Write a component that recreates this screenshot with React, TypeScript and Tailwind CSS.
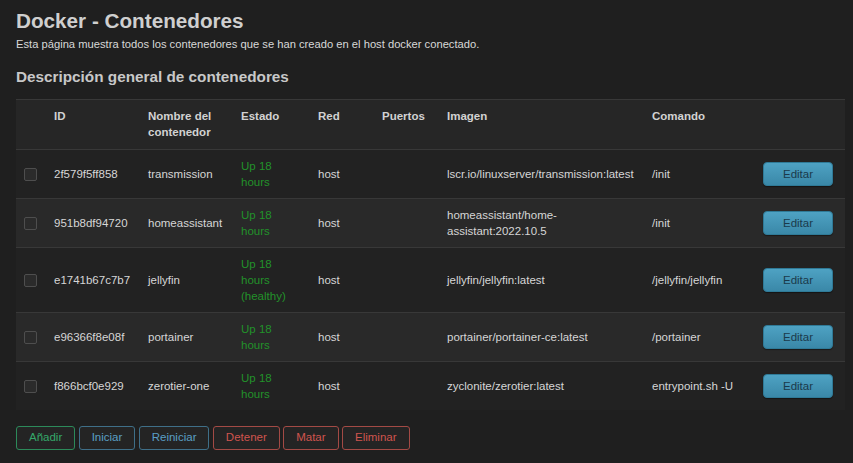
import { useState } from 'react'

type Container = {
  id: string
  name: string
  status: string[]
  network: string
  ports: string
  image: string[]
  command: string
}

const containers: Container[] = [
  { id: '2f579f5ff858', name: 'transmission', status: ['Up 18', 'hours'], network: 'host', ports: '', image: ['lscr.io/linuxserver/transmission:latest'], command: '/init' },
  { id: '951b8df94720', name: 'homeassistant', status: ['Up 18', 'hours'], network: 'host', ports: '', image: ['homeassistant/home-', 'assistant:2022.10.5'], command: '/init' },
  { id: 'e1741b67c7b7', name: 'jellyfin', status: ['Up 18', 'hours', '(healthy)'], network: 'host', ports: '', image: ['jellyfin/jellyfin:latest'], command: '/jellyfin/jellyfin' },
  { id: 'e96366f8e08f', name: 'portainer', status: ['Up 18', 'hours'], network: 'host', ports: '', image: ['portainer/portainer-ce:latest'], command: '/portainer' },
  { id: 'f866bcf0e929', name: 'zerotier-one', status: ['Up 18', 'hours'], network: 'host', ports: '', image: ['zyclonite/zerotier:latest'], command: 'entrypoint.sh -U' },
]

const actions = [
  { label: 'Añadir', cls: 'border-[#2c8a5a] text-[#35a86a]' },
  { label: 'Iniciar', cls: 'border-[#3f6f88] text-[#5a9fc4]' },
  { label: 'Reiniciar', cls: 'border-[#3f6f88] text-[#5a9fc4]' },
  { label: 'Detener', cls: 'border-[#a34a45] text-[#d0544e]' },
  { label: 'Matar', cls: 'border-[#a34a45] text-[#d0544e]' },
  { label: 'Eliminar', cls: 'border-[#a34a45] text-[#d0544e]' },
]

function Checkbox({ checked, onChange }: { checked: boolean; onChange: () => void }) {
  return (
    <button
      onClick={onChange}
      className="block h-[13px] w-[13px] rounded-[2px] border border-[#4e4e4e] bg-[#2b2b2b]"
    >
      {checked && <span className="block h-full w-full bg-[#3a86a6]" />}
    </button>
  )
}

export default function App() {
  const [selected, setSelected] = useState<string[]>([])

  const toggle = (id: string) =>
    setSelected((s) => (s.includes(id) ? s.filter((x) => x !== id) : [...s, id]))

  return (
    <div className="min-h-[463px] bg-[#1f1f1f] px-4 pt-[7px] font-['Liberation_Sans',Arial,sans-serif] text-[#d6d6d6]">
      <h1 className="text-[20.7px] font-bold leading-[28px] text-[#cfcfcf]">Docker - Contenedores</h1>
      <p className="mt-[2px] text-[11.2px] leading-[14px] text-[#d8d8d8]">
        Esta página muestra todos los contenedores que se han creado en el host docker conectado.
      </p>
      <h2 className="mt-[16px] text-[15.3px] font-bold leading-[20px] text-[#c8c8c8]">
        Descripción general de contenedores
      </h2>

      <table className="mt-[12px] w-[829px] table-fixed border-collapse text-[11.5px] leading-[16px]">
        <colgroup>
          <col className="w-[30px]" />
          <col className="w-[94px]" />
          <col className="w-[93px]" />
          <col className="w-[77px]" />
          <col className="w-[64px]" />
          <col className="w-[65px]" />
          <col className="w-[205px]" />
          <col className="w-[111px]" />
          <col className="w-[90px]" />
        </colgroup>
        <thead>
          <tr className="border-y border-[#383838] bg-[#262626] text-left align-top font-bold text-[#d2d2d2]">
            <th className="px-2 pb-[9px] pt-[8px]" />
            <th className="px-2 pb-[9px] pt-[8px]">ID</th>
            <th className="px-2 pb-[9px] pt-[8px]">Nombre del contenedor</th>
            <th className="px-2 pb-[9px] pt-[8px]">Estado</th>
            <th className="px-2 pb-[9px] pt-[8px]">Red</th>
            <th className="px-2 pb-[9px] pt-[8px]">Puertos</th>
            <th className="px-2 pb-[9px] pt-[8px]">Imagen</th>
            <th className="px-2 pb-[9px] pt-[8px]">Comando</th>
            <th className="px-2 pb-[9px] pt-[8px]" />
          </tr>
        </thead>
        <tbody>
          {containers.map((c, i) => (
            <tr
              key={c.id}
              className={
                'align-middle ' +
                (i % 2 === 1 ? 'bg-[#292929] ' : 'bg-[#222222] ') +
                (i < containers.length - 1 ? 'border-b border-[#383838]' : '')
              }
            >
              <td className="px-2 py-2">
                <Checkbox checked={selected.includes(c.id)} onChange={() => toggle(c.id)} />
              </td>
              <td className="px-2 py-2">{c.id}</td>
              <td className="px-2 py-2">{c.name}</td>
              <td className="px-2 py-2 text-[#22922a]">
                {c.status.map((s) => (
                  <div key={s}>{s}</div>
                ))}
              </td>
              <td className="px-2 py-2">{c.network}</td>
              <td className="px-2 py-2">{c.ports}</td>
              <td className="px-2 py-2">
                {c.image.map((s) => (
                  <div key={s}>{s}</div>
                ))}
              </td>
              <td className="px-2 py-2">{c.command}</td>
              <td className="px-2 py-2">
                <button className="h-[24px] w-[70px] rounded-[4px] border border-[#2f7a97] bg-gradient-to-b from-[#4ea2c3] to-[#3a88a8] text-[11.5px] text-[#1b3a4b] shadow-[0_1px_1px_rgba(0,0,0,0.4)]">
                  Editar
                </button>
              </td>
            </tr>
          ))}
        </tbody>
      </table>

      <div className="mt-[16px] flex gap-[3.4px]">
        {actions.map((a) => (
          <button
            key={a.label}
            className={'h-[24px] rounded-[3px] border bg-[#242424] px-[12px] text-[11.5px] ' + a.cls}
          >
            {a.label}
          </button>
        ))}
      </div>
    </div>
  )
}
